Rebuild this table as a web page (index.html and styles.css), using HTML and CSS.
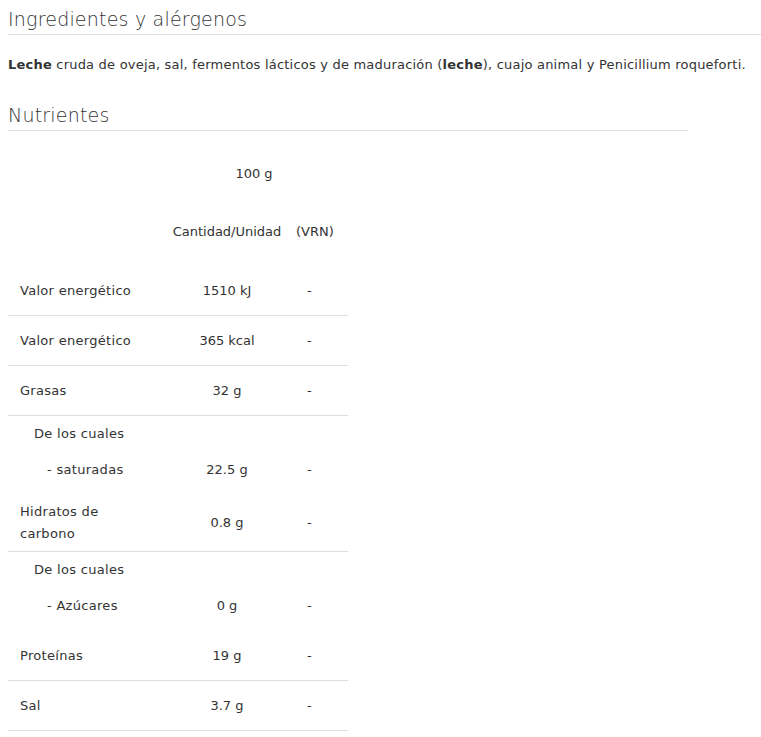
FILE: index.html
```html
<!DOCTYPE html>
<html lang="es">
<head>
<meta charset="utf-8">
<link rel="stylesheet" href="styles.css">
</head>
<body>
<section class="block block-wide">
  <h2 class="title">Ingredientes y alérgenos</h2>
  <p class="ingredients"><b>Leche</b> cruda de oveja, sal, fermentos lácticos y de maduración (<b>leche</b>), cuajo animal y Penicillium roqueforti.</p>
</section>
<section class="block block-narrow">
  <h2 class="title">Nutrientes</h2>
  <table class="nutri">
    <colgroup><col class="c1"><col class="c2"><col class="c3"></colgroup>
    <thead>
      <tr class="h1"><th></th><th colspan="2" class="qty">100 g</th></tr>
      <tr class="h2"><th></th><th class="unit">Cantidad/Unidad</th><th class="vrn">(VRN)</th></tr>
    </thead>
    <tbody>
      <tr class="main first"><td>Valor energético</td><td class="v">1510 kJ</td><td class="d">-</td></tr>
      <tr class="main"><td>Valor energético</td><td class="v">365 kcal</td><td class="d">-</td></tr>
      <tr class="main"><td>Grasas</td><td class="v">32 g</td><td class="d">-</td></tr>
      <tr class="sub"><td class="of">De los cuales</td><td></td><td></td></tr>
      <tr class="sub"><td class="item">- saturadas</td><td class="v">22.5 g</td><td class="d">-</td></tr>
      <tr class="main after-sub tight"><td>Hidratos de<br>carbono</td><td class="v">0.8 g</td><td class="d">-</td></tr>
      <tr class="sub"><td class="of">De los cuales</td><td></td><td></td></tr>
      <tr class="sub"><td class="item">- Azúcares</td><td class="v">0 g</td><td class="d">-</td></tr>
      <tr class="main after-sub"><td>Proteínas</td><td class="v">19 g</td><td class="d">-</td></tr>
      <tr class="main"><td>Sal</td><td class="v">3.7 g</td><td class="d">-</td></tr>
    </tbody>
  </table>
</section>
</body>
</html>
```
FILE: styles.css
```css
* { box-sizing: border-box; }
html, body { margin: 0; padding: 0; background: #fff; }
body {
  padding-left: 8px;
  font-family: "DejaVu Sans", "Open Sans", sans-serif;
  color: #333;
  overflow: hidden;
}
.block-wide { width: 753px; }
.block-narrow { width: 680px; margin-top: 20px; }
.title {
  margin: 0;
  padding-top: 8px;
  height: 35px;
  font-size: 19px;
  font-weight: 300;
  letter-spacing: 0.2px;
  color: #333;
  border-bottom: 1px solid #ddd;
  line-height: 22px;
}
.ingredients {
  margin: 0;
  padding-top: 19px;
  font-size: 13px;
  line-height: 22px;
  letter-spacing: 0.21px;
  color: #333;
}
.ingredients b { font-weight: 700; }

.nutri {
  border-collapse: collapse;
  width: 340px;
  font-size: 13px;
  line-height: 22px;
  margin-top: 14px;
}
.c1 { width: 152px; }
.c2 { width: 134px; }
.c3 { width: 54px; }
.nutri th { font-weight: 500; padding: 0; text-align: center; }
.h1 th { height: 58px; }
.h2 th { height: 58px; }
.nutri th.vrn { text-align: left; padding-left: 2px; }
.nutri td { padding: 14px 0 13px 12px; vertical-align: middle; letter-spacing: 0.3px; }
.nutri td.v { text-align: center; padding-left: 0; letter-spacing: 0; }
.nutri td.d { text-align: left; padding-left: 13px; letter-spacing: 0; }
.main td { border-bottom: 1px solid #ddd; }
.main.first td { padding-top: 19px; }
.sub td { padding-top: 7px; padding-bottom: 7px; }
.sub td.of { padding-left: 26px; }
.sub td.item { padding-left: 39px; }
.main.tight td { padding-top: 13px; padding-bottom: 6px; }
.main.after-sub:not(.tight) td { padding-top: 21px; }
```
